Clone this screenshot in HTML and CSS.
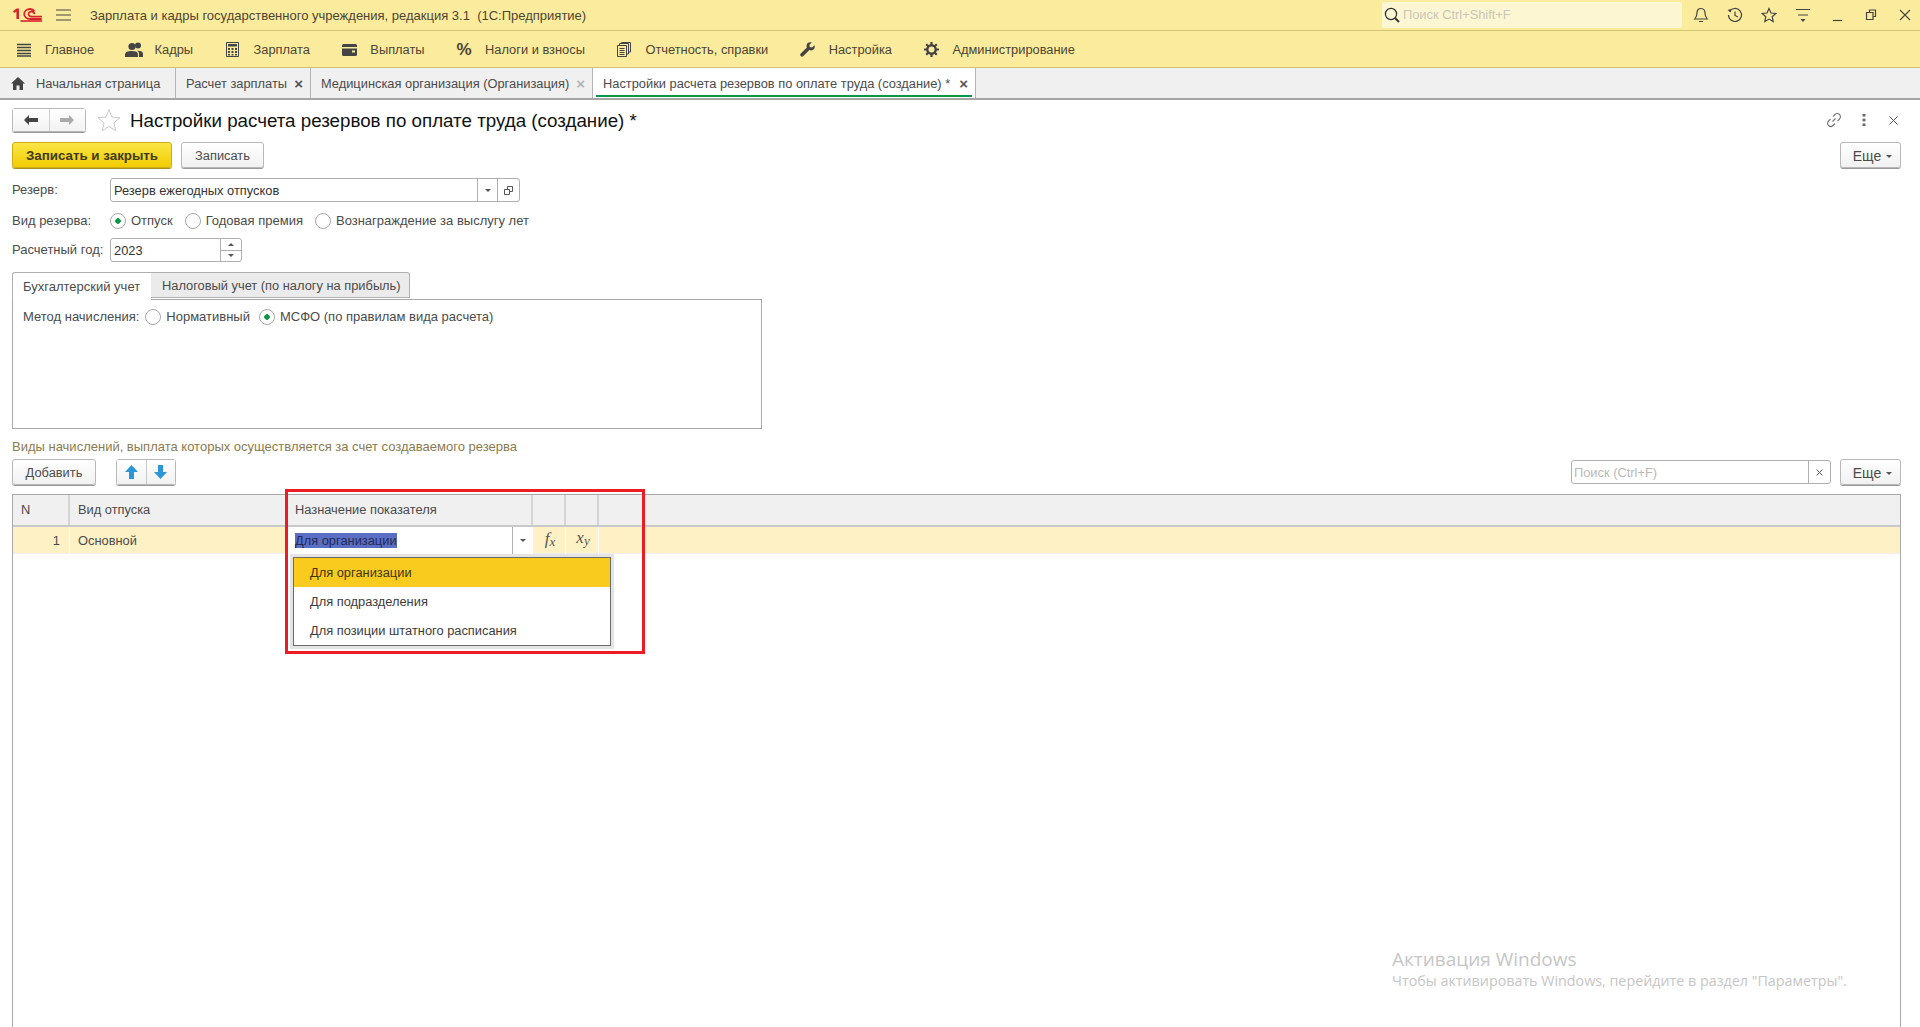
FILE: index.html
```html
<!DOCTYPE html>
<html lang="ru">
<head>
<meta charset="utf-8">
<title>Настройки расчета резервов по оплате труда</title>
<link rel="stylesheet" href="styles.css">
</head>
<body>
<div class="app">
  <header class="titlebar">
    <svg class="logo" viewBox="0 0 29 14" width="29" height="14"><path d="M0 3.2 3.6 0.6H6V11H3.4V3.6L1 5Z" fill="#d8232a"/><path d="M21.5 3.4A5 5 0 0 0 17.2 1C13.8 1 11.2 3 11.2 6s2.6 5 6 5h11.5M21.5 6.2a3 3 0 0 0-4.3-2.4c-2 .7-2.4 3-.6 4.3.7.5 1.4.6 2.1.6H29" fill="none" stroke="#d8232a" stroke-width="1.8"/><path d="M7.5 13h21.5" stroke="#d8232a" stroke-width="1.6"/></svg>
    <svg class="burger" viewBox="0 0 15 12" width="15" height="12"><path d="M0 1h15M0 6h15M0 11h15" stroke="#444" stroke-width="1"/></svg>
    <span class="apptitle">Зарплата и кадры государственного учреждения, редакция 3.1&nbsp; (1С:Предприятие)</span>
    <div class="globalsearch">
      <svg viewBox="0 0 16 16" width="16" height="16"><circle cx="7" cy="7" r="5.6" fill="none" stroke="#333" stroke-width="1.3"/><path d="M11 11l4 4" stroke="#333" stroke-width="2"/></svg>
      <span>Поиск Ctrl+Shift+F</span>
    </div>
    <div class="winicons">
      <svg viewBox="0 0 16 16" width="16" height="16"><path d="M8 1.500c-2.800 0-4 2-4 4.500 0 3-1 4.500-2.200 6h12.400C13 10.500 12 9 12 6c0-2.500-1.200-4.500-4-4.500zM6 14.500h4" fill="none" stroke="#444" stroke-width="1.200"/></svg>
      <svg viewBox="0 0 16 16" width="16" height="16"><path d="M2.500 4.500A6.500 6.500 0 1 1 1.500 8M8 4.500V8.500l3 1.500" fill="none" stroke="#444" stroke-width="1.200"/><path d="M0.500 3l3.500-1v3.500z" fill="#444"/></svg>
      <svg viewBox="0 0 16 16" width="16" height="16"><path d="M8 1.500l2 4.500 4.800.5-3.600 3.200 1 4.800L8 12.100 3.800 14.500l1-4.800L1.200 6.500 6 6z" fill="none" stroke="#444" stroke-width="1.200"/></svg>
      <svg viewBox="0 0 16 16" width="16" height="16"><path d="M1 2.500h14M3 8h10" stroke="#444" stroke-width="1"/><path d="M5.500 12h5L8 15z" fill="#444"/></svg>
      <svg viewBox="0 0 16 16" width="16" height="16"><path d="M4 13.500h9" stroke="#444" stroke-width="1.200"/></svg>
      <svg viewBox="0 0 16 16" width="16" height="16"><path d="M6.500 5V3h6v6.500h-2.500M3.500 5.500h6.500v7H3.500z" fill="none" stroke="#444" stroke-width="1.200"/></svg>
      <svg viewBox="0 0 16 16" width="16" height="16"><path d="M3 3l10 10M13 3L3 13" stroke="#444" stroke-width="1.100"/></svg>
    </div>
  </header>

  <nav class="mainmenu">
    <a class="menuitem"><span class="mi"><svg viewBox="0 0 16 14" width="16" height="14"><path d="M1 1.500h14M1 4.500h14M1 7.500h14M1 10.500h14M1 13h14" stroke="#444" stroke-width="1.600"/></svg></span>Главное</a>
    <a class="menuitem"><span class="mi"><svg viewBox="0 0 18 15" width="18" height="15"><circle cx="7" cy="4.500" r="3.600" fill="#444"/><circle cx="13" cy="3.500" r="3" fill="#444"/><path d="M0 15v-2.500c0-2.500 3-3.500 7-3.500s6 1 6 3.500V15z" fill="#444"/><path d="M14 15v-3c0-1.500-.8-2.500-2-3.200 3.500-.4 6 .8 6 3V15z" fill="#444"/></svg></span>Кадры</a>
    <a class="menuitem"><span class="mi"><svg viewBox="0 0 13 15" width="13" height="15"><path d="M0.500 0.500h12v14H.5z" fill="none" stroke="#444"/><path d="M2 2h9v2.500H2z" fill="#444"/><path d="M2 6h2v2H2zM5.500 6h2v2h-2zM9 6h2v2H9zM2 9h2v2H2zM5.500 9h2v2h-2zM9 9h2v2H9zM2 12h2v1.500H2zM5.500 12h2v1.500h-2zM9 12h2v1.500H9z" fill="#444"/></svg></span>Зарплата</a>
    <a class="menuitem"><span class="mi"><svg viewBox="0 0 15 12" width="15" height="12"><path d="M0 1.500A1.500 1.500 0 0 1 1.500 0h12A1.500 1.500 0 0 1 15 1.500V3H0z" fill="#444"/><path d="M0 4.500h15V10.500a1.500 1.500 0 0 1-1.500 1.500h-12A1.500 1.500 0 0 1 0 10.500zM10 6.500v2h3v-2z" fill="#444" fill-rule="evenodd"/></svg></span>Выплаты</a>
    <a class="menuitem"><span class="mi pct">%</span>Налоги и взносы</a>
    <a class="menuitem"><span class="mi"><svg viewBox="0 0 14 15" width="14" height="15"><path d="M.5 3.500h9v11h-9zM2.500 6.500h5M2.500 8.500h5M2.500 10.500h5M2.500 12.500h5M2.500 3V1.500h9V12H10M4.500 1V.5h9V10H12" fill="none" stroke="#444"/></svg></span>Отчетность, справки</a>
    <a class="menuitem"><span class="mi"><svg viewBox="0 0 15 15" width="15" height="15"><path d="M14.500 3.200 12 5.500 9.800 5 9.300 3 11.800.6C9.800-.3 7.500.6 6.800 2.500 6.400 3.600 6.500 4.600 6.900 5.500L.8 11.400c-.8.800-.8 1.900-.1 2.700.7.700 1.900.8 2.700 0l6-6c2 .7 3.800.2 4.800-1.300.6-1 .7-2.400.3-3.600z" fill="#444"/></svg></span>Настройка</a>
    <a class="menuitem"><span class="mi"><svg viewBox="0 0 15 15" width="15" height="15"><circle cx="7.500" cy="7.500" r="4.200" fill="none" stroke="#444" stroke-width="2.400"/><path d="M7.500 0v3M7.500 12v3M0 7.500h3M12 7.500h3M2.200 2.200l2.100 2.100M10.700 10.700l2.100 2.100M2.200 12.800l2.100-2.100M10.700 4.300l2.100-2.100" stroke="#444" stroke-width="2.200"/></svg></span>Администрирование</a>
  </nav>

  <div class="opentabs">
    <div class="otab otab-home"><svg viewBox="0 0 14 13" width="14" height="13"><path d="M7 0 0 6.500h2V13h3.500V8.500h3V13H12V6.500h2z" fill="#444"/></svg><span>Начальная страница</span></div>
    <div class="otab otab-calc"><span>Расчет зарплаты</span><i class="x">×</i></div>
    <div class="otab otab-org"><span>Медицинская организация (Организация)</span><i class="x x-dim">×</i></div>
    <div class="otab otab-active"><span>Настройки расчета резервов по оплате труда (создание) *</span><i class="x">×</i></div>
  </div>

  <main class="page">
    <div class="pagehead">
      <div class="navpair">
        <button class="navbtn"><svg viewBox="0 0 14 10" width="14" height="10"><path d="M0 5l5-5v3h9v4H5v3z" fill="#444"/></svg></button>
        <button class="navbtn"><svg viewBox="0 0 14 10" width="14" height="10"><path d="M14 5L9 0v3H0v4h9v3z" fill="#aaa"/></svg></button>
      </div>
      <svg class="favstar" viewBox="0 0 24 24" width="24" height="24"><path d="M12 1.500l3 7.600 8 .6-6.100 5.200 1.900 7.900L12 18.500l-6.800 4.300 1.900-7.900L1 9.700l8-.6z" fill="#fff" stroke="#c9c9c9"/></svg>
      <h1 class="pagetitle">Настройки расчета резервов по оплате труда (создание) *</h1>
      <div class="headtools">
        <svg viewBox="0 0 16 16" width="16" height="16"><path d="M6.500 9.500l3-3M7 4.500l2-2a3 3 0 0 1 4.500 4.500l-2 2M9 11.500l-2 2A3 3 0 0 1 2.500 9l2-2" fill="none" stroke="#777" stroke-width="1.100"/></svg>
        <svg viewBox="0 0 4 14" width="4" height="14"><path d="M0.500 1h3v2.400h-3zM0.500 5.800h3v2.400h-3zM0.500 10.600h3v2.400h-3z" fill="#666"/></svg>
        <svg viewBox="0 0 9 9" width="9" height="9"><path d="M.5.500l8 8M8.500.500l-8 8" stroke="#555"/></svg>
      </div>
    </div>

    <div class="actionbar">
      <button class="btn btn-primary">Записать и закрыть</button>
      <button class="btn btn-save">Записать</button>
      <button class="btn btn-more">Еще<b class="caret"></b></button>
    </div>

    <div class="field field-first">
      <label class="flabel">Резерв:</label>
      <div class="input input-reserve">
        <span class="ivalue">Резерв ежегодных отпусков</span>
        <span class="iaddon"><b class="caret"></b></span>
        <span class="iaddon"><svg viewBox="0 0 9 9" width="9" height="9"><path d="M3.500 3V.5h5v5H6M.5 3.500h5v5h-5z" fill="none" stroke="#555"/></svg></span>
      </div>
    </div>

    <div class="field field-radio">
      <label class="flabel">Вид резерва:</label>
      <div class="radios">
        <span class="radio on">Отпуск</span>
        <span class="radio">Годовая премия</span>
        <span class="radio">Вознаграждение за выслугу лет</span>
      </div>
    </div>

    <div class="field field-year">
      <label class="flabel">Расчетный год:</label>
      <div class="input input-year">
        <span class="ivalue">2023</span>
        <span class="spin"><i><b class="caret caret-up"></b></i><i><b class="caret"></b></i></span>
      </div>
    </div>

    <div class="formtabs">
      <div class="ftab ftab-on">Бухгалтерский учет</div>
      <div class="ftab">Налоговый учет (по налогу на прибыль)</div>
    </div>
    <div class="tabpanel">
      <div class="radios">
        <span class="plabel">Метод начисления:</span>
        <span class="radio">Нормативный</span>
        <span class="radio on">МСФО (по правилам вида расчета)</span>
      </div>
    </div>

    <div class="caption">Виды начислений, выплата которых осуществляется за счет создаваемого резерва</div>

    <div class="toolbar">
      <button class="btn btn-add">Добавить</button>
      <div class="movepair">
        <button class="movebtn"><svg viewBox="0 0 13 14" width="13" height="14"><path d="M6.500 0 13 7H9v7H4V7H0z" fill="#2b96d8"/></svg></button>
        <button class="movebtn"><svg viewBox="0 0 13 14" width="13" height="14"><path d="M6.500 14 13 7H9V0H4v7H0z" fill="#2b96d8"/></svg></button>
      </div>
      <div class="input input-find">
        <span class="ivalue placeholder">Поиск (Ctrl+F)</span>
        <span class="iaddon"><svg viewBox="0 0 7 7" width="7" height="7"><path d="M.5.500l6 6M6.500.500l-6 6" stroke="#555"/></svg></span>
      </div>
      <button class="btn btn-more">Еще<b class="caret"></b></button>
    </div>

    <div class="grid">
      <div class="gridrow gridhead">
        <div class="cell">N</div>
        <div class="cell">Вид отпуска</div>
        <div class="cell">Назначение показателя</div>
        <div class="cell"></div>
        <div class="cell"></div>
        <div class="cell cell-last"></div>
      </div>
      <div class="gridrow gridsel">
        <div class="cell cell-num">1</div>
        <div class="cell">Основной</div>
        <div class="cell cell-edit">
          <span class="editval"><span class="selected">Для организации</span></span>
          <span class="editdrop"><b class="caret"></b></span>
          <div class="popup">
            <div class="popitem popitem-on">Для организации</div>
            <div class="popitem">Для подразделения</div>
            <div class="popitem">Для позиции штатного расписания</div>
          </div>
        </div>
        <div class="cell cell-fn"><span class="fn">f<sub>x</sub></span></div>
        <div class="cell cell-fn"><span class="fn fn-up">x<sub>y</sub></span></div>
        <div class="cell cell-last"></div>
      </div>
    </div>
  </main>

  <div class="redframe"></div>
  <div class="watermark">
    <div class="wm1">Активация Windows</div>
    <div class="wm2">Чтобы активировать Windows, перейдите в раздел "Параметры".</div>
  </div>
</div>
</body>
</html>
```

FILE: styles.css
```css
* { box-sizing: border-box; }
html, body { margin: 0; padding: 0; height: 100%; }
body { font: 12.85px/16px "Liberation Sans", Arial, sans-serif; color: #4b4b4b; background: #fff; overflow: hidden; }
button { font: inherit; color: inherit; padding: 0; }
svg { display: block; flex: none; }

.app { position: relative; display: flex; flex-direction: column; height: 1027px; }

/* title bar */
.titlebar { display: flex; align-items: center; height: 31px; flex: none; background: #fbec9d; border-bottom: 1px solid #d2c272; padding-left: 13px; }
.burger { margin-left: 14px; }
.apptitle { margin-left: 19px; font-size: 13px; color: #4d4533; position: relative; top: 1px; }
.globalsearch { display: flex; align-items: center; gap: 3px; margin-left: auto; width: 300px; height: 26px; background: #fdf6d2; border-radius: 2px; padding-left: 2px; color: #c9c6b8; }
.winicons { display: flex; align-items: center; gap: 18px; margin-left: 11px; padding-right: 7px; }

/* main menu */
.mainmenu { display: flex; align-items: center; gap: 27.5px; height: 37px; padding-top: 1px; flex: none; background: #fbec9d; border-bottom: 1px solid #d2c272; padding-left: 12px; }
.menuitem { display: flex; align-items: center; color: #4d4533; }
.mi { display: flex; align-items: center; justify-content: center; width: 24px; margin-right: 9px; }
.pct { font-size: 17px; font-weight: bold; }

/* open tabs */
.opentabs { display: flex; height: 32px; flex: none; background: #f0f0f0; border-bottom: 2px solid #a5a5a5; }
.otab { display: flex; align-items: center; height: 30px; padding-top: 1px; border-right: 1px solid #b5b5b5; padding-left: 10px; color: #4b4b4b; }
.otab-home { width: 176px; gap: 11px; padding-left: 11px; }
.otab-calc { width: 135px; }
.otab-org { width: 282px; }
.otab-active { position: relative; width: 383px; background: #fff; }
.otab-active::after { content: ""; position: absolute; left: 3px; right: 3px; bottom: 1px; height: 2px; background: #0b9649; }
.x { font: bold 15px/16px "Liberation Sans", sans-serif; margin-left: auto; margin-right: 7px; color: #555; }
.x-dim { color: #b4b4b4; }

/* page */
.page { flex: 1; display: flex; flex-direction: column; min-height: 0; padding: 0 19px 0 12px; }
.pagehead { display: flex; align-items: center; height: 24px; margin-top: 8px; flex: none; }
.navpair { display: flex; width: 74px; height: 24px; border: 1px solid #b8b8b8; border-radius: 3px; box-shadow: 0 1px 0 #999; }
.navbtn { flex: 1; display: flex; align-items: center; justify-content: center; border: 0; background: linear-gradient(#fff, #f2f2f2); }
.navbtn + .navbtn { border-left: 1px solid #d0d0d0; }
.favstar { margin-left: 11px; }
.pagetitle { margin: 0 0 0 9px; padding-top: 1px; font-size: 18.75px; line-height: 24px; font-weight: normal; color: #111; }
.headtools { display: flex; align-items: center; margin-left: auto; }
.headtools svg:nth-child(1) { margin-right: 20px; }
.headtools svg:nth-child(2) { margin-right: 23px; }
.headtools svg:nth-child(3) { margin-right: 3px; }

.btn { height: 26px; padding-top: 1px; border: 1px solid #b8b8b8; border-radius: 3px; background: linear-gradient(#fff, #f1f1f1); box-shadow: 0 1px 0 #999; color: #4b4b4b; }
.actionbar { display: flex; height: 26px; margin-top: 10px; flex: none; }
.btn-primary { width: 160px; background: linear-gradient(#fbe547, #f1cc00); border-color: #cfae10; box-shadow: 0 1px 0 #a8911a; font-weight: bold; color: #3f3a1d; font-size: 13.33px; }
.btn-save { width: 83px; margin-left: 9px; }
.btn-more { width: 61px; margin-left: auto; padding-left: 4px; font-size: 14px; }
.caret { display: inline-block; width: 0; height: 0; border: 3px solid transparent; border-top: 3px solid #555; border-bottom: 0; vertical-align: middle; margin-left: 5px; }
.caret-up { border-top: 0; border-bottom: 3px solid #555; }

.field { display: flex; align-items: center; height: 24px; flex: none; }
.field-first { margin-top: 10px; }
.field-radio { margin-top: 7px; }
.field-year { margin-top: 5px; }
.flabel { width: 98px; flex: none; font-size: 13px; }

.input { display: flex; height: 24px; border: 1px solid #b0b0b0; border-radius: 3px; background: #fff; color: #333; }
.ivalue { flex: 1; padding-left: 3px; line-height: 23px; white-space: nowrap; }
.iaddon { display: flex; align-items: center; justify-content: center; border-left: 1px solid #b0b0b0; }
.iaddon .caret { margin: 0; }
.input-reserve { width: 410px; }
.input-reserve .iaddon { width: 20px; }
.input-reserve .iaddon + .iaddon { width: 22px; }
.input-year { width: 132px; }
.spin { display: flex; flex-direction: column; width: 21px; border-left: 1px solid #b0b0b0; }
.spin i { flex: 1; display: flex; align-items: center; justify-content: center; }
.spin i + i { border-top: 1px solid #b0b0b0; }
.spin .caret { margin: 0; }

.radios { display: flex; align-items: center; font-size: 13px; }
.radio { display: flex; align-items: center; gap: 5px; margin-right: 12px; white-space: nowrap; }
.radio::before { content: ""; width: 14px; height: 14px; flex: none; border: 1px solid #a8a8a8; border-radius: 50%; background: #fff; }
.radio.on::before { background: radial-gradient(circle, #0b9649 0 2.500px, #fff 3px); }
.tabpanel .radio { margin-right: 9px; }

.formtabs { display: flex; height: 27px; margin-top: 10px; flex: none; position: relative; z-index: 1; }
.ftab { display: flex; align-items: center; width: 259px; padding: 1px 0 0 11px; border: 1px solid #b0b0b0; border-left: 0; border-radius: 0 3px 0 0; background: #ebebeb; margin-bottom: 1px; }
.ftab-on { width: 139px; padding-left: 10px; font-size: 13px; border-left: 1px solid #b0b0b0; border-right: 0; border-bottom: 0; border-radius: 3px 0 0 0; background: #fff; margin-bottom: -1px; }
.tabpanel { width: 750px; height: 130px; flex: none; border: 1px solid #a8a8a8; padding: 9px 10px; }
.plabel { margin-right: 6px; }

.caption { height: 16px; margin-top: 10px; flex: none; font-size: 13px; color: #8a7b4f; }

.toolbar { display: flex; align-items: center; height: 26px; margin-top: 4px; flex: none; }
.btn-add { width: 84px; }
.movepair { display: flex; width: 60px; height: 26px; margin-left: 20px; border: 1px solid #b8b8b8; border-radius: 3px; box-shadow: 0 1px 0 #999; }
.movebtn { flex: 1; display: flex; align-items: center; justify-content: center; border: 0; background: linear-gradient(#fff, #f1f1f1); }
.movebtn + .movebtn { border-left: 1px solid #c8c8c8; }
.input-find { width: 260px; margin-left: auto; }
.input-find .iaddon { width: 22px; }
.placeholder { color: #b9b9b9; padding-left: 2px; }
.input-find + .btn-more { margin-left: 9px; }

/* table */
.grid { flex: 1; min-height: 0; margin-top: 9px; border: 1px solid #a8a8a8; border-bottom: 0; }
.gridrow { display: grid; grid-template-columns: 57px 217px 246px 33px 33px 1fr; }
.gridhead { height: 32px; background: #f0f0f0; border-bottom: 2px solid #c9c9c9; }
.gridhead .cell { display: flex; align-items: center; padding-left: 8px; border-right: 2px solid #d4d4d4; }
.gridsel { height: 27px; background: #fdf1c5; border-bottom: 1px solid #efefef; }
.gridsel .cell { display: flex; align-items: center; padding-left: 8px; border-right: 1px solid #fff; }
.cell-last { border-right: 0 !important; }
.cell-num { justify-content: flex-end; padding-right: 9px; }
.gridsel .cell-edit { position: relative; background: #fff; padding-left: 8px; border-right: 0; }
.editval { flex: 1; color: #333; }
.selected { background: #5a6fc4; color: #232a55; display: inline-block; line-height: 15px; }
.editdrop { display: flex; align-items: center; justify-content: center; width: 21px; height: 27px; border-left: 1px solid #b0b0b0; }
.editdrop .caret { margin: 0; }
.gridsel .cell-fn { justify-content: center; padding: 0; }
.fn { font: italic 17px/16px "Liberation Serif", serif; color: #555; position: relative; top: -2px; left: 1px; }
.fn sub { font-size: 13px; vertical-align: -2px; line-height: 0; }
.fn-up { top: -3px; }

.popup { position: absolute; left: 6px; top: 30px; width: 318px; height: 89px; background: #fff; border: 1px solid #6b6b6b; box-shadow: 0 0 0 3px #e4e4e4; z-index: 2; padding-top: 0; }
.popitem { height: 29px; line-height: 29px; padding-left: 16px; color: #3c3c3c; white-space: nowrap; }
.popitem-on { background: #f9cb1e; color: #3f3517; }

/* overlays */
.redframe { position: absolute; left: 285px; top: 489px; width: 360px; height: 165px; border: 3px solid #ed1c24; pointer-events: none; z-index: 3; }
.watermark { position: absolute; left: 1392px; top: 945px; color: #c6c6c6; font-family: "Open Sans", sans-serif; }
.wm1 { font-size: 19px; line-height: 28px; }
.wm2 { font-size: 14.3px; line-height: 20px; margin-top: -2px; }
```
